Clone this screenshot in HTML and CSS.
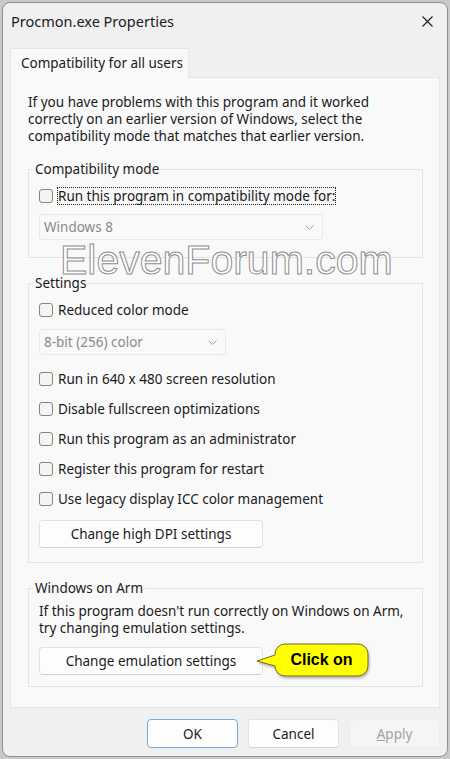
FILE: index.html
```html
<!DOCTYPE html>
<html lang="en">
  <head>
    <meta charset="UTF-8" />
    <meta name="viewport" content="width=device-width, initial-scale=1.0" />
    <title>Procmon.exe Properties</title>
    <link rel="stylesheet" href="styles.css">
  </head>
  <body>

    <div class="window">
      <div class="titlebar">
        <span class="title">Procmon.exe Properties</span>
        <span class="close">
          <svg width="11" height="11" viewBox="0 0 11 11">
            <path d="M0.5 0.5L10.5 10.5M10.5 0.5L0.5 10.5" stroke="#1b1b1b" stroke-width="1.1" fill="none" />
          </svg>
        </span>
      </div>

      <div class="tabs">
        <div class="tab">Compatibility for all users</div>
      </div>

      <div class="panel">
        <p class="intro">
          If you have problems with this program and it worked<br>
          correctly on an earlier version of Windows, select the<br>
          compatibility mode that matches that earlier version.
        </p>

        <fieldset class="group compat">
          <legend>Compatibility mode</legend>
          <label class="check">
            <span class="box"></span>
            <span class="text focus">Run this program in compatibility mode for:</span>
          </label>
          <div class="select os">
            <span>Windows 8</span>
            <svg width="9" height="5" viewBox="0 0 9 5"><path d="M0.5 0.5L4.5 4.5L8.5 0.5" stroke="#a3a3a3" fill="none" /></svg>
          </div>
        </fieldset>

        <fieldset class="group settings">
          <legend>Settings</legend>
          <label class="check">
            <span class="box"></span>
            <span class="text">Reduced color mode</span>
          </label>
          <div class="select color">
            <span>8-bit (256) color</span>
            <svg width="9" height="5" viewBox="0 0 9 5"><path d="M0.5 0.5L4.5 4.5L8.5 0.5" stroke="#a3a3a3" fill="none" /></svg>
          </div>
          <label class="check first">
            <span class="box"></span>
            <span class="text">Run in 640 x 480 screen resolution</span>
          </label>
          <label class="check">
            <span class="box"></span>
            <span class="text">Disable fullscreen optimizations</span>
          </label>
          <label class="check">
            <span class="box"></span>
            <span class="text">Run this program as an administrator</span>
          </label>
          <label class="check">
            <span class="box"></span>
            <span class="text">Register this program for restart</span>
          </label>
          <label class="check">
            <span class="box"></span>
            <span class="text">Use legacy display ICC color management</span>
          </label>
          <button class="btn wide">Change high DPI settings</button>
        </fieldset>

        <fieldset class="group arm">
          <legend>Windows on Arm</legend>
          <p class="note">
            If this program doesn't run correctly on Windows on Arm,<br>
            try changing emulation settings.
          </p>
          <button class="btn wide">Change emulation settings</button>
        </fieldset>
      </div>

      <div class="footer">
        <button class="btn dlg default">OK</button>
        <button class="btn dlg">Cancel</button>
        <button class="btn dlg disabled"><u>A</u>pply</button>
      </div>

      <div class="watermark">ElevenForum.com</div>

      <div class="callout">
        <svg width="120" height="42" viewBox="0 0 120 42">
          <path d="M31 3H104A10 10 0 0 1 114 13V25A10 10 0 0 1 104 35H31A10 10 0 0 1 21 25L3 20L21 14V13A10 10 0 0 1 31 3Z"
                fill="#ffff00" stroke="#6f6a2a" stroke-width="1" />
        </svg>
        <span class="callout-text">Click on</span>
      </div>
    </div>

  </body>
</html>
```

FILE: styles.css
```css
body {
    margin: 0;
    background: #c9c9c9;
    font-family: "Noto Sans", "Open Sans", sans-serif;
    font-size: 13.5px;
    color: #1a1a1a;
  }

.window {
    position: relative;
    margin: 2px;
    width: 444px;
    height: 753px;
    border: 1px solid #8f8f8f;
    border-radius: 8px;
    background: #f0f0f0;
    display: flex;
    flex-direction: column;
    overflow: hidden;
  }

.titlebar {
    height: 45px;
    padding: 8px 14px 0 8px;
    box-sizing: border-box;
    display: flex;
    justify-content: space-between;
    align-items: flex-start;
  }

.title {
    font-size: 14.5px;
    line-height: 20px;
    color: #1b1b1b;
  }

.close {
    height: 20px;
    display: flex;
    align-items: center;
  }

.tabs {
    height: 29px;
    padding-left: 7px;
    display: flex;
  }

.tab {
    position: relative;
    z-index: 1;
    width: 179px;
    box-sizing: border-box;
    padding-left: 10px;
    line-height: 28px;
    white-space: nowrap;
    background: #f9f9f9;
    border: 1px solid #e6e6e6;
    border-bottom: none;
    margin-bottom: -1px;
  }

.panel {
    flex: 1;
    margin: 0 7px;
    padding: 16px 16px 0 17px;
    background: #f9f9f9;
    border: 1px solid #e6e6e6;
    display: flex;
    flex-direction: column;
  }

.intro {
    margin: 0;
    line-height: 17px;
    white-space: nowrap;
  }

.group {
    margin: 0;
    padding: 0 10px;
    border: 1px solid #e3e3e3;
    min-width: 0;
  }

.group legend {
    padding: 0 2px;
    margin-left: -6px;
    line-height: 17px;
  }

.compat {
    margin-top: 16px;
    padding-top: 8px;
    padding-bottom: 17px;
  }

.settings {
    margin-top: 17px;
    padding-top: 8px;
    padding-bottom: 14px;
  }

.arm {
    margin-top: 17px;
    padding-top: 6px;
    padding-bottom: 11px;
  }

.check {
    height: 20px;
    display: flex;
    align-items: center;
    white-space: nowrap;
  }

.settings .check + .check {
    margin-top: 10px;
  }

.settings .check.first {
    margin-top: 14px;
  }

.box {
    width: 14px;
    height: 14px;
    box-sizing: border-box;
    border: 1px solid #858585;
    border-radius: 3px;
    background: #f4f4f4;
  }

.text {
    margin-left: 5px;
    line-height: 16px;
  }

.text.focus {
    margin-left: 4px;
    border: 1px dotted #222;
  }

.select {
    height: 26px;
    box-sizing: border-box;
    margin-top: 8px;
    padding: 0 8px 0 4px;
    border: 1px solid #e9e9e9;
    border-radius: 3px;
    background: #f9f9f9;
    color: #8a8a8a;
    display: flex;
    align-items: center;
    justify-content: space-between;
  }

.select.os {
    width: 284px;
  }

.select.color {
    width: 187px;
    margin-top: 9px;
  }

.btn {
    font-family: inherit;
    font-size: 13.5px;
    color: #1a1a1a;
    background: #fdfdfd;
    border: 1px solid #e2e2e2;
    border-bottom-color: #d2d2d2;
    border-radius: 4px;
    padding: 0;
  }

.btn.wide {
    display: block;
    width: 224px;
    height: 28px;
    margin-top: 11px;
  }

.arm .btn.wide {
    margin-top: 10px;
  }

.note {
    margin: 0;
    line-height: 17px;
    white-space: nowrap;
  }

.footer {
    height: 48px;
    box-sizing: border-box;
    padding: 11px 7px 0 0;
    display: flex;
    justify-content: flex-end;
    gap: 10px;
  }

.btn.dlg {
    width: 91px;
    height: 29px;
  }

.btn.default {
    border: 1px solid #78a9dc;
  }

.btn.disabled {
    background: #f5f5f5;
    border-color: #ededed;
    color: #a2a2a2;
  }

/* site watermark laid over the dialog */
.watermark {
    position: absolute;
    left: 57px;
    top: 242px;
    font-family: "Liberation Sans", Arial, sans-serif;
    font-size: 41px;
    line-height: 30px;
    color: #ffffff;
    -webkit-text-stroke: 1px #8d8d8d;
    pointer-events: none;
  }

.callout {
    position: absolute;
    left: 251px;
    top: 638px;
    width: 120px;
    height: 42px;
  }

.callout svg {
    display: block;
    filter: drop-shadow(1px 2px 1px rgba(0, 0, 0, 0.25));
  }

.callout-text {
    position: absolute;
    left: 21px;
    top: 3px;
    width: 93px;
    height: 32px;
    display: flex;
    align-items: center;
    justify-content: center;
    font-family: "Liberation Sans", Arial, sans-serif;
    font-weight: bold;
    font-size: 16px;
    color: #000;
  }
```
